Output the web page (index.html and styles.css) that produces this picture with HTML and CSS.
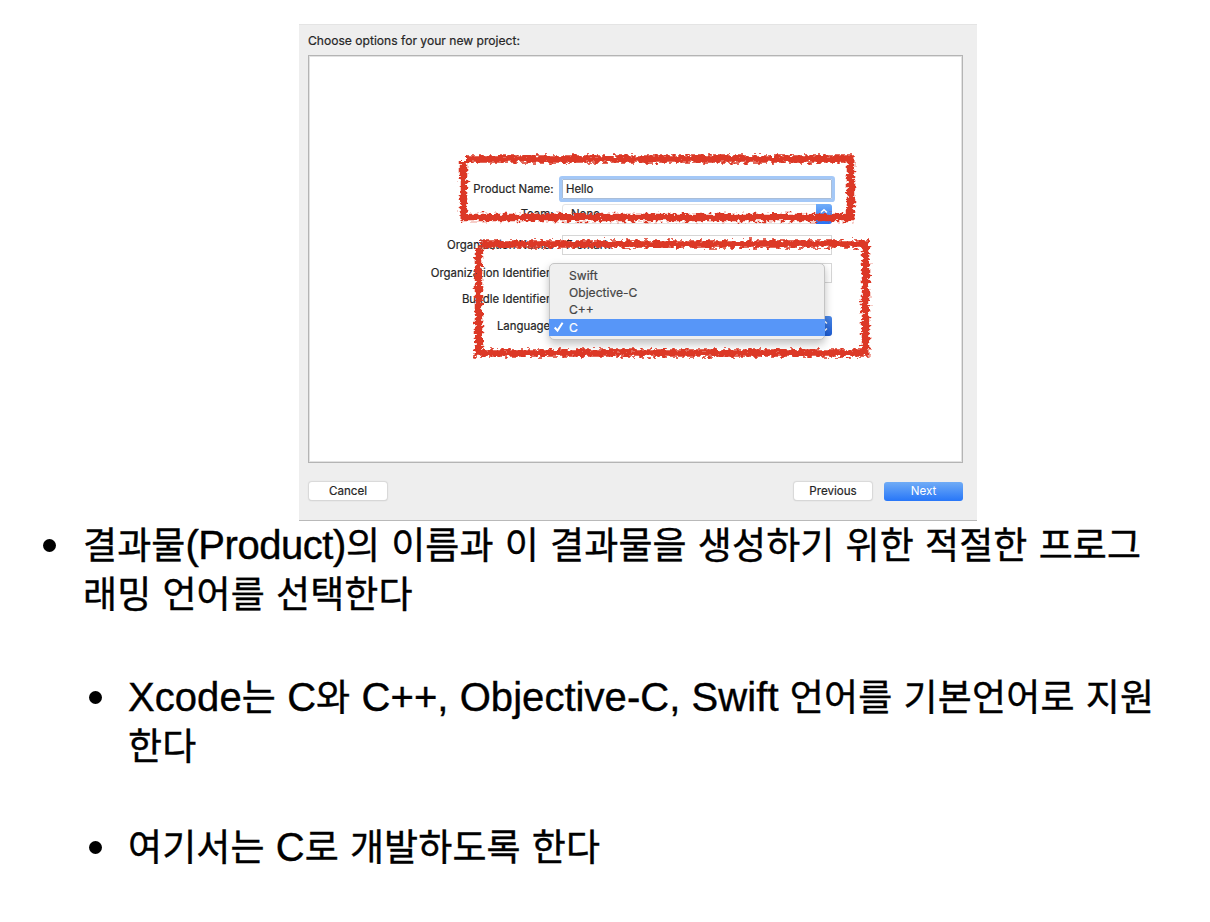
FILE: index.html
```html
<!DOCTYPE html>
<html lang="ko">
<head>
<meta charset="utf-8">
<title>Xcode</title>
<link rel="stylesheet" href="styles.css">
</head>
<body>
<main class="slide">
  <section class="dialog">
    <h1 class="dialog-title">Choose options for your new project:</h1>
    <div class="panel">
      <div class="form">
        <label>Product Name:</label><div class="field focused">Hello</div>
        <label>Team:</label><div class="field select">None<span class="stepper"><svg width="16" height="20" viewBox="0 0 16 20"><path d="M5 8.500 8 5.8l3 2.7M5 12.5l3 2.7 3-2.7"/></svg></span></div>
        <label>Organization Name:</label><div class="field">Fromark</div>
        <label>Organization Identifier:</label><div class="field"></div>
        <label>Bundle Identifier:</label><div></div>
        <label>Language:</label><div class="field select"><span class="stepper dark"><svg width="16" height="20" viewBox="0 0 16 20"><path d="M5 7.5 8 4.8l3 2.7M5 12.5l3 2.7 3-2.7"/></svg></span></div>
      </div>
    </div>
    <div class="actions">
      <button class="btn">Cancel</button>
      <button class="btn previous">Previous</button>
      <button class="btn next">Next</button>
    </div>
    <ul class="menu">
      <li>Swift</li>
      <li>Objective-C</li>
      <li>C++</li>
      <li class="selected"><svg class="check" width="12" height="12" viewBox="0 0 12 12"><path d="M1.7 6.5 4.5 9.6 9.6 1.8"/></svg>C</li>
    </ul>
    <svg class="marks" width="678" height="497" viewBox="0 0 678 497">
      <defs>
        <filter id="chalk" filterUnits="userSpaceOnUse" x="0" y="0" width="678" height="497" color-interpolation-filters="sRGB">
          <feTurbulence type="fractalNoise" baseFrequency="0.22 0.34" numOctaves="2" seed="11" result="noise"/>
          <feDisplacementMap in="SourceGraphic" in2="noise" scale="8.500" xChannelSelector="R" yChannelSelector="G"/>
        </filter>
      </defs>
      <g filter="url(#chalk)">
        <path d="M166 134H555.500M551.500 131V196M555.500 192.500H160.500M164.500 195V136"/>
        <path d="M181 219H570M566.500 219V331M570.500 328H175.500M179.500 331V223"/>
      </g>
    </svg>
  </section>
  <ul class="notes">
    <li><span class="line l1">결과물<b>(Product)</b>의 이름과 이 결과물을 생성하기 위한 적절한 프로그</span><span class="line">래밍 언어를 선택한다</span>
      <ul class="sub">
        <li><span class="line l3"><b>Xcode</b>는 <b>C</b>와 <b>C++, Objective-C, Swift</b> 언어를 기본언어로 지원</span><span class="line">한다</span></li>
        <li><span class="line">여기서는 <b>C</b>로 개발하도록 한다</span></li>
      </ul>
    </li>
  </ul>
</main>
</body>
</html>
```
FILE: styles.css
```css
* { box-sizing: border-box; }
body { margin: 0; background: #fff; }
ul { list-style: none; margin: 0; padding: 0; }

.slide { width: 1210px; height: 922px; padding-top: 24px; overflow: hidden; }

.dialog {
  position: relative;
  width: 678px;
  height: 497px;
  margin-left: 299px;
  padding: 0 14px 0 9px;
  background: #eee;
  border-top: 1px solid #e4e4e4;
  border-bottom: 1px solid #b9b9b9;
  font: 11.4px/16px Inter, sans-serif;
  color: #262626;
  -webkit-text-stroke: 0.2px currentColor;
}
.dialog-title { margin: 0; padding: 8px 0 0; height: 30px; font-size: 12.1px; font-weight: 400; }
.panel { height: 408px; border: 1px solid #b4b4b4; outline: 1px solid #e2e2e2; outline-offset: -2px; background: #fff; padding-top: 119px; }
.form {
  display: grid;
  grid-template-columns: 244.5px 270px;
  grid-template-rows: 27px 24px 38px 18px 34px 20px;
  column-gap: 8.5px;
  align-items: center;
}
.form label { text-align: right; white-space: nowrap; }
.field {
  height: 20px;
  padding-left: 3px;
  border: 1px solid #d6d6d6;
  line-height: 19px;
}
.focused { box-shadow: 0 0 0 3px #a4c8f7; border-color: #a9bdd8; border-radius: 1px; }
.select { display: flex; padding-left: 8px; border-color: #e4e4e4; border-radius: 3px; }
.stepper {
  width: 16px;
  height: 20px;
  margin: -1px -1px 0 auto;
  border-radius: 0 3px 3px 0;
  background: linear-gradient(#72aef8, #2671f6);
}
.stepper.dark { background: linear-gradient(#4b88e8, #1c5bd2); }
.stepper svg { display: block; fill: none; stroke: #fff; stroke-width: 1.5; }

.actions { display: flex; align-items: center; padding-top: 18.5px; }
.btn {
  width: 78px;
  height: 18px;
  padding: 0;
  border: 0;
  border-radius: 3px;
  background: #fff;
  box-shadow: 0 0 1px 0.5px #d8d8d8, 0 1px 1px #ccc;
  font: inherit;
  font-size: 11.6px;
  color: inherit;
}
.btn:first-child { margin-left: 1px; }
.previous { margin-left: auto; margin-right: 12px; }
.next { width: 79px; height: 19px; color: #fff; background: linear-gradient(#70acf6, #2776f8); box-shadow: none; -webkit-text-stroke: 0; }

.menu {
  position: absolute;
  left: 250px;
  top: 238px;
  width: 276px;
  height: 77px;
  padding-top: 3px;
  border: 1px solid #c4c4c4;
  border-radius: 5px;
  background: #efefef;
  box-shadow: 0 4px 9px rgba(0, 0, 0, 0.25);
  font-size: 12.1px;
  color: #444;
}
.menu li { height: 17.2px; line-height: 17px; padding-left: 19px; }
.menu .selected { display: flex; align-items: center; margin: 0 -1px; padding-left: 4px; gap: 4px; background: #5796f8; color: #fff; }
.check { fill: none; stroke: #fff; stroke-width: 2; }

.marks { position: absolute; left: 0; top: 0; fill: none; stroke: #dc3826; stroke-width: 7.5; }

.notes {
  padding: 1px 0 0 83px;
  font: 37px/49px "Liberation Sans", "Noto Sans CJK KR", sans-serif;
  color: #000;
  letter-spacing: 0.1px;
  word-spacing: 0.8px;
  -webkit-text-stroke: 0.4px #000;
}
.notes b { font-size: 40px; font-weight: 400; line-height: 1; letter-spacing: 0; word-spacing: 0; }
.notes li { position: relative; }
.notes li::before {
  content: "";
  position: absolute;
  left: -40px;
  top: 17px;
  width: 13px;
  height: 13px;
  border-radius: 50%;
  background: #000;
}
.line { display: block; height: 49px; white-space: nowrap; }
.l1 { word-spacing: 0.8px; }
.l1 b { letter-spacing: -0.45px; }
.l3 { letter-spacing: 0.15px; }
.l3 b { letter-spacing: 0.06px; }
.sub { padding: 54px 0 0 45px; }
.sub li { margin-bottom: 52px; }
.sub li::before { left: -39px; }
```
